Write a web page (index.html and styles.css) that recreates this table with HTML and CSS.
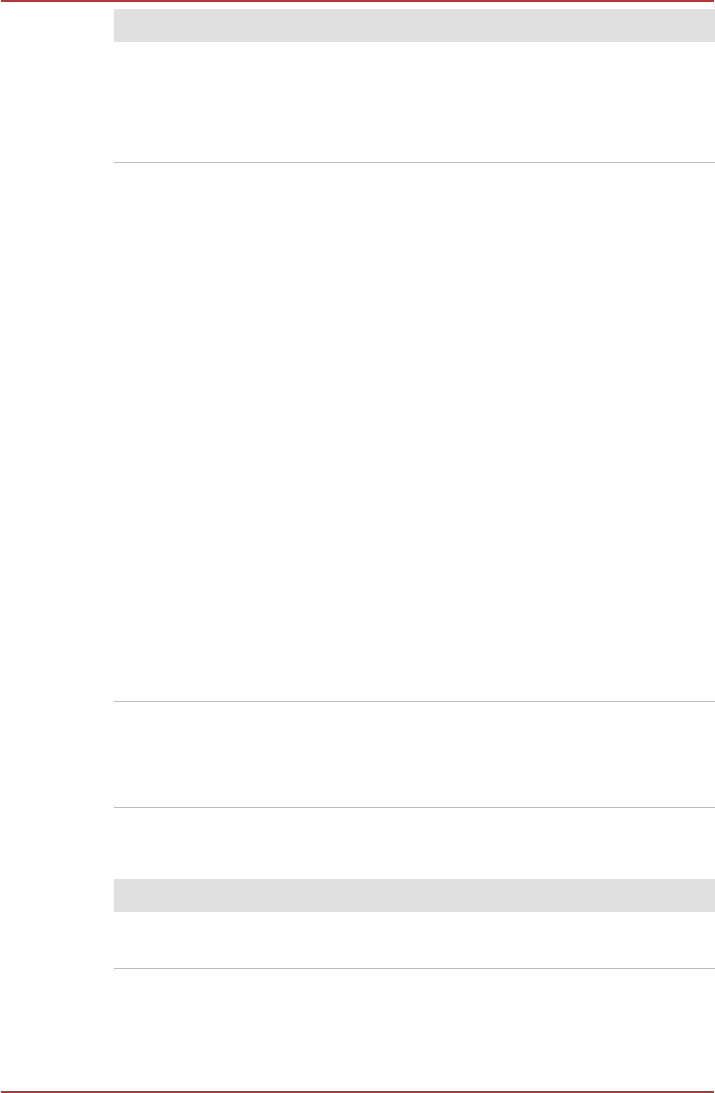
FILE: index.html
```html
<!DOCTYPE html>
<html lang="en">
<head>
    <meta charset="UTF-8">
    <meta name="viewport" content="width=device-width, initial-scale=1.0">
    <title>Document</title>
    <link rel="stylesheet" href="styles.css">
</head>
<body>
    <div class="page">
        <div class="rule"></div>
        <div class="content">
            <!-- 第一个表格 -->
            <div class="table">
                <div class="thead"></div>
                <div class="row row1"></div>
                <div class="row row2"></div>
                <div class="row row3"></div>
            </div>
            <!-- 第二个表格 -->
            <div class="table table2">
                <div class="thead"></div>
                <div class="row row4"></div>
            </div>
        </div>
        <div class="rule"></div>
    </div>
</body>
</html>
```

FILE: styles.css
```css
*{
    margin: 0;
    padding: 0;
    box-sizing: border-box;
}
body{
    font-family: "Liberation Sans", Arial, sans-serif;
    background-color: #fff;
}
.page{
    height: 100vh;
    display: flex;
    flex-direction: column;
}
.rule{
    height: 2px;
    margin: 0 1px;
    background-color: #a43c3c;
}
.content{
    flex: 1;
    padding-left: 114px;
}
.table{
    margin-top: 7px;
}
.table2{
    margin-top: 71px;
}
.thead{
    height: 33px;
    background-color: #e0e0e0;
}
.row{
    border-bottom: 1px solid #bdbdbd;
}
.row1{
    height: 121px;
}
.row2{
    height: 539px;
}
.row3{
    height: 106px;
}
.row4{
    height: 57px;
}
```
